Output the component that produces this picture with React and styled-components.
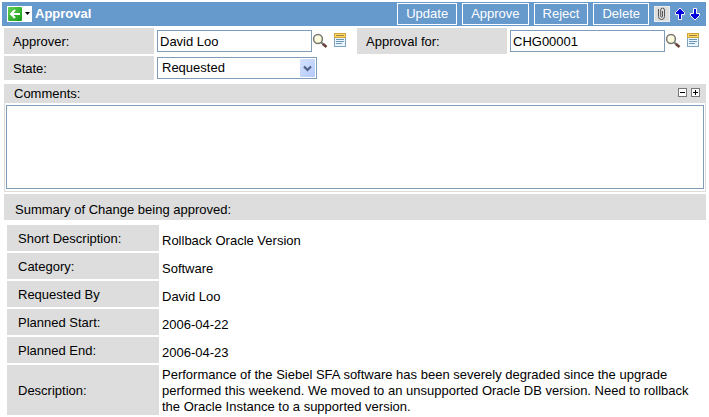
import React from "react";
import styled, { createGlobalStyle } from "styled-components";

const GlobalStyle = createGlobalStyle`
  *, *::before, *::after { box-sizing: border-box; }
  body {
    margin: 0;
    background: #fff;
    color: #000;
    font-family: "Liberation Sans", Arial, sans-serif;
    font-size: 13px;
    line-height: 16px;
  }
  button, input, select, textarea { font: inherit; color: inherit; }
`;

const Page = styled.main`
  padding: 2px 3px 2px 2px;
`;

const Toolbar = styled.header`
  display: flex;
  align-items: center;
  justify-content: space-between;
  height: 24px;
  padding: 0 6px 0 5px;
  background: #6699cc;
  color: #fff;
`;

const ToolbarSide = styled.div`
  display: flex;
  align-items: center;
  gap: 5px;
`;

const BackButton = styled.button`
  display: flex;
  padding: 0;
  border: 0;
  background: #fff;
`;

const Title = styled.h1`
  margin: 0 0 0 -2px;
  font-size: 13px;
  line-height: 16px;
`;

const ActionButton = styled.button`
  height: 22px;
  padding: 0 8px;
  border: 1px solid #fff;
  background: transparent;
  color: #fff;
`;

const AttachButton = styled.button`
  display: flex;
  align-items: center;
  justify-content: center;
  width: 16px;
  height: 16px;
  padding: 0;
  border: 1px solid #eeeeee;
  background: #dddddd;
`;

const IconButton = styled.button`
  display: flex;
  padding: 0;
  border: 0;
  background: transparent;
`;

const Body = styled.div`
  margin-left: 2px;
`;

const Fields = styled.div`
  display: grid;
  grid-template-columns: 1fr 1fr;
  gap: 2px 4px;
  padding: 2px 0 4px;
`;

const Field = styled.div`
  display: flex;
  align-items: center;
  height: ${(p) => (p.$short ? "24px" : "26px")};
`;

const FieldLabel = styled.label`
  flex: none;
  align-self: stretch;
  display: flex;
  align-items: center;
  width: 150px;
  margin-right: 3px;
  padding: 2px 0 0 9px;
  background: #dddddd;
`;

const TextInput = styled.input`
  width: 155px;
  height: 22px;
  padding: 0 2px;
  border: 1px solid #7f9db9;
  border-radius: 0;
  background: #fff;
`;

const LookupIcons = styled.div`
  display: flex;
  gap: 6px;
`;

const SelectBox = styled.div`
  position: relative;
  width: 160px;
  height: 22px;
`;

const Select = styled.select`
  appearance: none;
  width: 100%;
  height: 100%;
  padding: 0 20px 0 4px;
  border: 1px solid #7f9db9;
  border-radius: 0;
  background: #fff;
`;

const SelectArrow = styled.span`
  position: absolute;
  top: 2px;
  right: 2px;
  display: flex;
  align-items: center;
  justify-content: center;
  width: 15px;
  height: 18px;
  border-radius: 1px;
  background: linear-gradient(135deg, #d5e1fd, #b5cafa);
  pointer-events: none;
`;

const Comments = styled.section`
  border: 1px solid #dddddd;
`;

const CommentsBar = styled.div`
  display: flex;
  align-items: center;
  justify-content: space-between;
  height: 18px;
  padding: 0 5px 0 9px;
  background: #dddddd;
`;

const SizeButtons = styled.div`
  display: flex;
  gap: 4px;
  margin-top: -3px;
`;

const CommentsArea = styled.textarea`
  display: block;
  width: calc(100% - 2px);
  height: 84px;
  margin: 2px 1px;
  padding: 2px;
  border: 1px solid #7f9db9;
  border-radius: 0;
  background: #fff;
  resize: none;
`;

const SummaryHeading = styled.h2`
  margin: 2px 0 3px;
  padding: 8px 11px 2px;
  background: #dddddd;
  font-size: 13px;
  font-weight: normal;
  line-height: 16px;
`;

const SummaryTable = styled.table`
  width: 100%;
  border-collapse: separate;
  border-spacing: 2px;
  padding-left: 1px;
`;

const SummaryLabel = styled.th`
  width: 152px;
  height: 26px;
  padding: 2px 11px 0;
  background: #dddddd;
  font-weight: normal;
  text-align: left;
`;

const SummaryValue = styled.td`
  padding: ${(p) => (p.$long ? "2px 8px 0 1px" : "6px 1px 0")};
`;

const BackIcon = () => (
  <svg width="25" height="16" viewBox="0 0 25 16" aria-hidden="true">
    <defs>
      <linearGradient id="green" x1="0" y1="0" x2="1" y2="1">
        <stop offset="0" stopColor="#63cf50" />
        <stop offset="1" stopColor="#159b17" />
      </linearGradient>
    </defs>
    <rect x="1" y="1" width="14" height="14" rx="1" fill="url(#green)" />
    <path d="M13 8H4M8 4L4 8l4 4" fill="none" stroke="#fff" strokeWidth="2" />
    <path d="M18 6h5l-2.5 3z" fill="#000" />
  </svg>
);

const ClipIcon = () => (
  <svg width="10" height="14" viewBox="0 0 10 14" fill="none" stroke="#555" aria-hidden="true">
    <path d="M1.5 2v7.5a3 3 0 0 0 6 0V3a1.9 1.9 0 0 0-3.8 0v6.2a.9.9 0 0 0 1.8 0V4" />
  </svg>
);

const ArrowIcon = ({ down }) => (
  <svg width="10" height="14" viewBox="0 0 10 14" aria-hidden="true">
    <path
      d={down ? "M3.5 1.5h3v5h3v2L5 13 .5 8.5v-2h3z" : "M5 1l4.5 4.5v2h-3v5h-3v-5h-3v-2z"}
      fill="#0000dd"
      stroke="#fff"
    />
  </svg>
);

const SearchIcon = () => (
  <svg width="16" height="16" viewBox="0 0 16 16" aria-hidden="true">
    <path d="M9.5 9.5l2.5 2.5" stroke="#777" strokeWidth="2" />
    <path d="M11 11l3.5 3" stroke="#68423a" strokeWidth="2.6" />
    <circle cx="6" cy="6" r="4.4" fill="#fbfbdc" stroke="#77776f" strokeWidth="1.5" />
    <path d="M3.5 6A2.5 2.5 0 0 1 6 3.5" fill="none" stroke="#fff" />
  </svg>
);

const RecordIcon = () => (
  <svg width="12" height="14" viewBox="0 0 12 14" aria-hidden="true">
    <rect x=".5" y=".5" width="11" height="13" fill="#eaf6ff" stroke="#7fa2bd" />
    <path d="M.5 4.5v-4h11v4z" fill="#ffdc68" stroke="#d5a336" />
    <path d="M2 2.5h8" stroke="#99804b" />
    <path d="M2 6.5h8M2 8.5h8M2 10.5h6" stroke="#6d96b5" />
  </svg>
);

const SizeIcon = ({ plus }) => (
  <svg width="9" height="9" viewBox="0 0 9 9" aria-hidden="true">
    <rect x=".5" y=".5" width="8" height="8" fill="#fff" stroke="#777" />
    <path d={plus ? "M2 4.5h5M4.5 2v5" : "M2 4.5h5"} stroke="#000" />
  </svg>
);

const Lookup = ({ name }) => (
  <LookupIcons>
    <IconButton type="button" aria-label={`Look up ${name}`}><SearchIcon /></IconButton>
    <IconButton type="button" aria-label={`Open ${name}`}><RecordIcon /></IconButton>
  </LookupIcons>
);

const ACTIONS = ["Update", "Approve", "Reject", "Delete"];

const SUMMARY = [
  ["Short Description:", "Rollback Oracle Version"],
  ["Category:", "Software"],
  ["Requested By", "David Loo"],
  ["Planned Start:", "2006-04-22"],
  ["Planned End:", "2006-04-23"],
  [
    "Description:",
    "Performance of the Siebel SFA software has been severely degraded since the upgrade performed this weekend. We moved to an unsupported Oracle DB version. Need to rollback the Oracle Instance to a supported version.",
    true,
  ],
];

export default function App() {
  return (
    <Page>
      <GlobalStyle />
      <Toolbar>
        <ToolbarSide>
          <BackButton type="button" aria-label="Back"><BackIcon /></BackButton>
          <Title>Approval</Title>
        </ToolbarSide>
        <ToolbarSide>
          {ACTIONS.map((name) => (
            <ActionButton type="button" key={name}>{name}</ActionButton>
          ))}
          <AttachButton type="button" aria-label="Attach file"><ClipIcon /></AttachButton>
          <IconButton type="button" aria-label="Previous record"><ArrowIcon /></IconButton>
          <IconButton type="button" aria-label="Next record"><ArrowIcon down /></IconButton>
        </ToolbarSide>
      </Toolbar>
      <Body>
        <Fields>
          <Field>
            <FieldLabel htmlFor="approver">Approver:</FieldLabel>
            <TextInput id="approver" defaultValue="David Loo" />
            <Lookup name="approver" />
          </Field>
          <Field>
            <FieldLabel htmlFor="approval-for">Approval for:</FieldLabel>
            <TextInput id="approval-for" defaultValue="CHG00001" />
            <Lookup name="change" />
          </Field>
          <Field $short>
            <FieldLabel htmlFor="state">State:</FieldLabel>
            <SelectBox>
              <Select id="state" defaultValue="Requested">
                <option>Requested</option>
              </Select>
              <SelectArrow>
                <svg width="9" height="7" viewBox="0 0 9 7" aria-hidden="true">
                  <path d="M1 1.5l3.5 3.5L8 1.5" fill="none" stroke="#4d6185" strokeWidth="2.2" />
                </svg>
              </SelectArrow>
            </SelectBox>
          </Field>
        </Fields>
        <Comments>
          <CommentsBar>
            <label htmlFor="comments">Comments:</label>
            <SizeButtons>
              <IconButton type="button" aria-label="Shrink comments"><SizeIcon /></IconButton>
              <IconButton type="button" aria-label="Enlarge comments"><SizeIcon plus /></IconButton>
            </SizeButtons>
          </CommentsBar>
          <CommentsArea id="comments" />
        </Comments>
        <SummaryHeading>Summary of Change being approved:</SummaryHeading>
        <SummaryTable>
          <tbody>
            {SUMMARY.map(([label, value, long]) => (
              <tr key={label}>
                <SummaryLabel scope="row">{label}</SummaryLabel>
                <SummaryValue $long={long}>{value}</SummaryValue>
              </tr>
            ))}
          </tbody>
        </SummaryTable>
      </Body>
    </Page>
  );
}
